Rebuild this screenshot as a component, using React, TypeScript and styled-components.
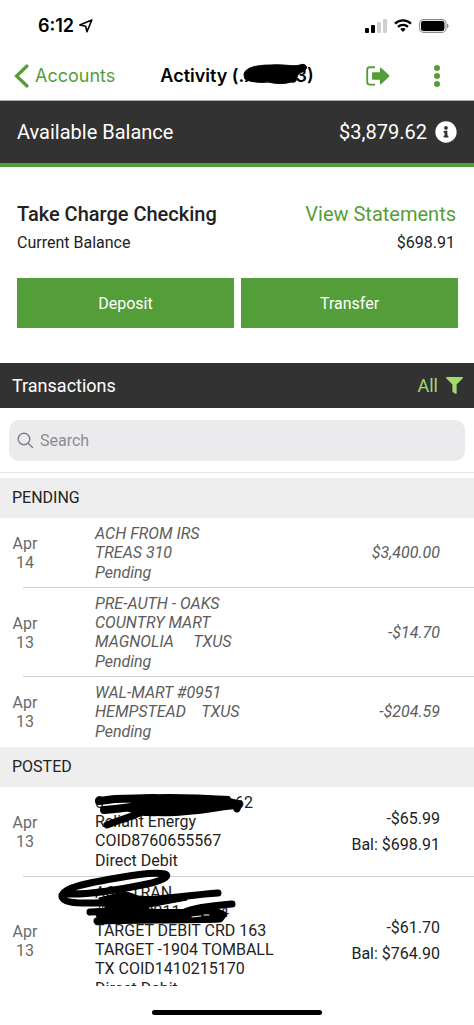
import React from "react";
import styled, { createGlobalStyle } from "styled-components";
import { FaFilter, FaInfoCircle } from "react-icons/fa";

const green = "#549e39";
const dark = "#323232";
const system = `Inter, "Liberation Sans", sans-serif`;
const body = `Roboto, "Liberation Sans", sans-serif`;

const GlobalStyle = createGlobalStyle`
  *, *::before, *::after { box-sizing: border-box; }
  body { margin: 0; background: #fff; color: #222; font: 16px/19px ${body}; }
  h1, h2, h3, p, ul { margin: 0; padding: 0; font: inherit; list-style: none; }
  button { border: 0; background: none; padding: 0; font: inherit; color: inherit; cursor: pointer; }
  a { color: inherit; text-decoration: none; }
  svg { display: block; flex: none; }
`;

const Screen = styled.div`
  display: flex;
  flex-direction: column;
  height: 100vh;
  overflow: hidden;
`;

const StatusBar = styled.div`
  display: flex;
  align-items: center;
  justify-content: space-between;
  height: 51px;
  padding: 0 25px 0 38px;
  color: #000;
  font: 600 18px/20px ${system};
`;

const StatusGroup = styled.div<{ $gap: number }>`
  display: flex;
  align-items: center;
  gap: ${(p) => p.$gap}px;
`;

const NavBar = styled.nav`
  display: grid;
  grid-template-columns: 1fr auto 1fr;
  align-items: center;
  height: 50px;
  padding: 0 28px 0 14px;
  border-bottom: 1px solid #a9adab;
  font: 18px/24px ${system};
`;

const BackLink = styled.a`
  display: flex;
  align-items: center;
  gap: 6px;
  color: ${green};
`;

const Title = styled.h1`
  position: relative;
  padding-left: 14px;
  color: #000;
  font: 600 18px/24px ${system};
`;

const NavActions = styled.div`
  display: flex;
  justify-content: flex-end;
  align-items: center;
  gap: 38px;
`;

const IconButton = styled.button<{ $light?: boolean }>`
  display: flex;
  color: ${(p) => (p.$light ? "#fff" : green)};
`;

const Scribble = styled.svg<{ $left: number }>`
  position: absolute;
  left: ${(p) => p.$left}px;
  top: 0;
  overflow: visible;
  pointer-events: none;
  fill: none;
  stroke: #000;
  stroke-linecap: round;
  stroke-linejoin: round;
`;

const BalanceBar = styled.section`
  display: flex;
  align-items: center;
  justify-content: space-between;
  height: 66px;
  padding: 0 17px;
  border-bottom: 4px solid ${green};
  background: ${dark};
  color: #fff;
  font-size: 20px;
  line-height: 24px;
`;

const BalanceValue = styled.div`
  display: flex;
  align-items: center;
  gap: 8px;
`;

const Account = styled.section`
  padding: 34px 16px 35px 17px;
`;

const AccountRow = styled.div<{ $large?: boolean }>`
  display: flex;
  justify-content: space-between;
  font-size: ${(p) => (p.$large ? 20 : 16)}px;
  line-height: ${(p) => (p.$large ? 26 : 32)}px;
`;

const AccountName = styled.h2`
  font-weight: 500;
`;

const StatementsLink = styled.a`
  padding-right: 2px;
  color: ${green};
`;

const CurrentValue = styled.span`
  padding-right: 3px;
`;

const Actions = styled.div`
  display: grid;
  grid-template-columns: 1fr 1fr;
  gap: 7px;
  margin-top: 19px;
`;

const ActionButton = styled.button`
  height: 50px;
  background: ${green};
  color: #fff;
`;

const TransactionsBar = styled.div`
  display: flex;
  align-items: center;
  justify-content: space-between;
  height: 45px;
  padding: 0 11px 0 12px;
  background: ${dark};
  color: #fff;
  font-size: 18px;
  line-height: 22px;
`;

const FilterButton = styled.button`
  display: flex;
  align-items: center;
  gap: 8px;
  color: #a5d86e;
`;

const SearchArea = styled.div`
  padding: 12px 9px 11px;
  border-bottom: 1px solid #e6e6e8;
`;

const SearchBox = styled.label`
  display: flex;
  align-items: center;
  gap: 6px;
  height: 41px;
  padding: 0 8px;
  border-radius: 10px;
  background: #ebebed;
  color: #808084;
`;

const SearchInput = styled.input`
  flex: 1;
  min-width: 0;
  padding: 0;
  border: 0;
  outline: 0;
  background: none;
  color: #222;
  font: 16px/20px ${body};
  &::placeholder { color: #8b8b90; opacity: 1; }
`;

const List = styled.main`
  flex: 1;
  min-height: 0;
  padding-top: 5px;
  overflow: hidden;
`;

const GroupTitle = styled.h3`
  height: 40px;
  padding: 0 12px;
  background: #eee;
  line-height: 40px;
`;

const Row = styled.li<{ $pending?: boolean }>`
  position: relative;
  display: grid;
  grid-template-columns: 26px 1fr auto;
  column-gap: 57px;
  align-items: center;
  padding: ${(p) => (p.$pending ? "6px 34px 6px 12px" : "6px 34px 7px 12px")};
  color: ${(p) => (p.$pending ? "#5c5c5c" : "#222")};
  font-style: ${(p) => (p.$pending ? "italic" : "normal")};
  &:not(:last-child)::after {
    content: "";
    position: absolute;
    left: 23px;
    right: 0;
    bottom: 0;
    height: 1px;
    background: #cfcfd1;
  }
`;

const DateCell = styled.div`
  color: #6a6a6a;
  font-style: normal;
  text-align: center;
`;

const Description = styled.div`
  position: relative;
  white-space: pre;
`;

const HiddenLine = styled.p<{ $width: number }>`
  display: flex;
  justify-content: space-between;
  width: ${(p) => p.$width}px;
`;

const Kind = styled.p`
  margin-top: 1px;
`;

const Amounts = styled.div`
  text-align: right;
  line-height: 26px;
`;

const HomeArea = styled.footer`
  display: flex;
  justify-content: center;
  height: 39px;
  padding-top: 24px;
`;

const HomeIndicator = styled.div`
  width: 36%;
  height: 5px;
  border-radius: 3px;
  background: #000;
`;

type Entry = {
  day: string;
  lines: React.ReactNode[];
  kind: string;
  amount: string;
  balance?: string;
  cover?: React.ReactNode;
};

const pending: Entry[] = [
  { day: "14", lines: ["ACH FROM IRS", "TREAS 310"], kind: "Pending", amount: "$3,400.00" },
  {
    day: "13",
    lines: ["PRE-AUTH - OAKS", "COUNTRY MART", "MAGNOLIA     TXUS"],
    kind: "Pending",
    amount: "-$14.70",
  },
  { day: "13", lines: ["WAL-MART #0951", "HEMPSTEAD    TXUS"], kind: "Pending", amount: "-$204.59" },
];

const posted: Entry[] = [
  {
    day: "13",
    lines: [
      <HiddenLine $width={158}><span>0</span><span>62</span></HiddenLine>,
      "Reliant Energy",
      "COID8760655567",
    ],
    kind: "Direct Debit",
    amount: "-$65.99",
    balance: "Bal: $698.91",
    cover: (
      <Scribble $left={0} width="160" height="50" aria-hidden="true">
        <path
          d="M30 5C50 1 85 1 134 4L140 15C122 17 108 20 92 21C76 23 62 22 50 22L34 18L26 14L50 10Z"
          fill="#000"
          strokeWidth="2"
        />
        <path d="M4 8L20 6L60 5M9 17C22 16 38 14 60 10" strokeWidth="8" />
        <path d="M12 32C22 28 34 24 48 19" strokeWidth="7" />
        <path d="M132 8L144 11L142 16" strokeWidth="7" />
      </Scribble>
    ),
  },
  {
    day: "13",
    lines: [
      "ACH TRAN",
      <HiddenLine $width={134}><span>#</span><span>0211</span><span>4</span></HiddenLine>,
      "TARGET DEBIT CRD 163",
      "TARGET -1904 TOMBALL",
      "TX COID1410215170",
    ],
    kind: "Direct Debit",
    amount: "-$61.70",
    balance: "Bal: $764.90",
    cover: (
      <Scribble $left={0} width="180" height="60" aria-hidden="true">
        <path
          d="M-28 11C-2 12 28 6 52 1C66 -2 76 -7 70 -9C60 -11 38 -8 22 -5C-6 0 -30 4 -33 12C-34 21 -14 20 -2 20C12 20 26 19 38 18C68 16 96 12 123 10"
          strokeWidth="7"
        />
        <path d="M4 15L28 9C34 9 38 11 43 13L60 14L90 11L92 17L54 24L50 38H8L10 24Z" fill="#000" strokeWidth="1" />
        <path d="M-5 29L20 28L50 29L88 30C100 24 118 23 137 21" strokeWidth="7" />
        <path d="M0 27L94 27L116 23L130 30L126 38L4 39Z" fill="#000" strokeWidth="2" />
        <path d="M2 38C40 37 90 37 125 36L128 32" strokeWidth="7" />
        <path d="M97 34L106 33M109 32L114 32" stroke="#fff" strokeWidth="1" />
      </Scribble>
    ),
  },
];

const TransactionRow = ({ entry, isPending }: { entry: Entry; isPending?: boolean }) => (
  <Row $pending={isPending}>
    <DateCell>Apr<br />{entry.day}</DateCell>
    <Description>
      {entry.lines.map((line, i) => (
        typeof line === "string" ? <p key={i}>{line}</p> : <React.Fragment key={i}>{line}</React.Fragment>
      ))}
      <Kind>{entry.kind}</Kind>
      {entry.cover}
    </Description>
    <Amounts>
      <p>{entry.amount}</p>
      {entry.balance && <p>{entry.balance}</p>}
    </Amounts>
  </Row>
);

export default function App() {
  return (
    <>
      <GlobalStyle />
      <Screen>
        <StatusBar>
          <StatusGroup $gap={5}>
            <span>6:12</span>
            <svg width="14" height="14" viewBox="0 0 14 14" fill="none" stroke="#000" strokeWidth="1.6" strokeLinejoin="round" aria-hidden="true">
              <path d="M12.8 1L.8 6L6.6 7.2L8 12.8Z" />
            </svg>
          </StatusGroup>
          <StatusGroup $gap={7}>
            <svg width="22" height="14" viewBox="0 0 22 14" aria-hidden="true">
              <rect x="0" y="9" width="4" height="5" rx="1" />
              <rect x="6" y="6" width="4" height="8" rx="1" />
              <rect x="12" y="3" width="4" height="11" rx="1" fill="#d0d0d0" />
              <rect x="18" y="0" width="4" height="14" rx="1" fill="#d0d0d0" />
            </svg>
            <svg width="18" height="13" viewBox="0 0 18 13" fill="none" stroke="#000" strokeWidth="2.3" aria-hidden="true">
              <path d="M1 4.6C5.4 .2 12.6 .2 17 4.6M4 7.9C6.9 5.1 11.1 5.1 14 7.9" />
              <path d="M6.2 10.1C7.8 8.5 10.2 8.5 11.8 10.1L9 13Z" fill="#000" stroke="none" />
            </svg>
            <svg width="30" height="14" viewBox="0 0 30 14" aria-hidden="true">
              <rect x=".6" y=".6" width="26.4" height="12.8" rx="4" fill="none" stroke="#8c8c8c" strokeWidth="1.1" />
              <rect x="2" y="2" width="23.4" height="10" rx="2.2" />
              <path d="M28.2 4.8C29.9 5.4 29.9 8.6 28.2 9.2Z" fill="#777" />
            </svg>
          </StatusGroup>
        </StatusBar>

        <NavBar>
          <BackLink href="#accounts">
            <svg width="15" height="24" viewBox="0 0 15 24" fill="none" stroke="currentColor" strokeWidth="3.2" strokeLinecap="round" aria-hidden="true">
              <path d="M13 2L2.5 12L13 22" />
            </svg>
            Accounts
          </BackLink>
          <Title>
            Activity (.xxxxx3)
            <Scribble $left={97} width="66" height="24" aria-hidden="true">
              <path
                d="M1 10C2 4 12 1 28 1C42 0 50 3 57 1C61 -1 65 2 63 5C61 8 55 9 54 13C54 17 52 19 48 18C42 20 34 20 25 18C18 19 6 18 2 15Z"
                fill="#000"
                strokeWidth="1"
              />
            </Scribble>
          </Title>
          <NavActions>
            <IconButton aria-label="Sign out">
              <svg width="24" height="20" viewBox="0 0 24 20" aria-hidden="true">
                <path d="M9 1.2H3.6Q1.2 1.2 1.2 3.8V16Q1.2 18.6 3.6 18.6H9" fill="none" stroke="currentColor" strokeWidth="1.9" />
                <path d="M7 6.2H14V2.4Q14 .8 15.3 2L23 9Q23.8 9.9 23 10.7L15.3 18Q14 19.2 14 17.6V13.8H7Q6 13.8 6 12.8V7.2Q6 6.2 7 6.2Z" fill="currentColor" />
              </svg>
            </IconButton>
            <IconButton aria-label="More">
              <svg width="18" height="22" viewBox="0 0 18 22" fill="currentColor" aria-hidden="true">
                <circle cx="9" cy="3" r="3" />
                <circle cx="9" cy="11" r="3" />
                <circle cx="9" cy="19" r="3" />
              </svg>
            </IconButton>
          </NavActions>
        </NavBar>

        <BalanceBar>
          <span>Available Balance</span>
          <BalanceValue>
            $3,879.62
            <IconButton $light aria-label="Balance information">
              <FaInfoCircle size={22} />
            </IconButton>
          </BalanceValue>
        </BalanceBar>

        <Account>
          <AccountRow $large>
            <AccountName>Take Charge Checking</AccountName>
            <StatementsLink href="#statements">View Statements</StatementsLink>
          </AccountRow>
          <AccountRow>
            <span>Current Balance</span>
            <CurrentValue>$698.91</CurrentValue>
          </AccountRow>
          <Actions>
            <ActionButton>Deposit</ActionButton>
            <ActionButton>Transfer</ActionButton>
          </Actions>
        </Account>

        <TransactionsBar>
          <h2>Transactions</h2>
          <FilterButton>
            All
            <FaFilter size={17} />
          </FilterButton>
        </TransactionsBar>

        <SearchArea>
          <SearchBox>
            <svg width="17" height="17" viewBox="0 0 17 17" fill="none" stroke="currentColor" strokeWidth="1.4" strokeLinecap="round" aria-hidden="true">
              <circle cx="7" cy="7" r="5.8" />
              <path d="M11.2 11.2L15.6 15.6" />
            </svg>
            <SearchInput type="text" placeholder="Search" aria-label="Search" />
          </SearchBox>
        </SearchArea>

        <List>
          <GroupTitle>PENDING</GroupTitle>
          <ul>
            {pending.map((entry, i) => <TransactionRow key={i} entry={entry} isPending />)}
          </ul>
          <GroupTitle>POSTED</GroupTitle>
          <ul>
            {posted.map((entry, i) => <TransactionRow key={i} entry={entry} />)}
          </ul>
        </List>

        <HomeArea>
          <HomeIndicator />
        </HomeArea>
      </Screen>
    </>
  );
}
